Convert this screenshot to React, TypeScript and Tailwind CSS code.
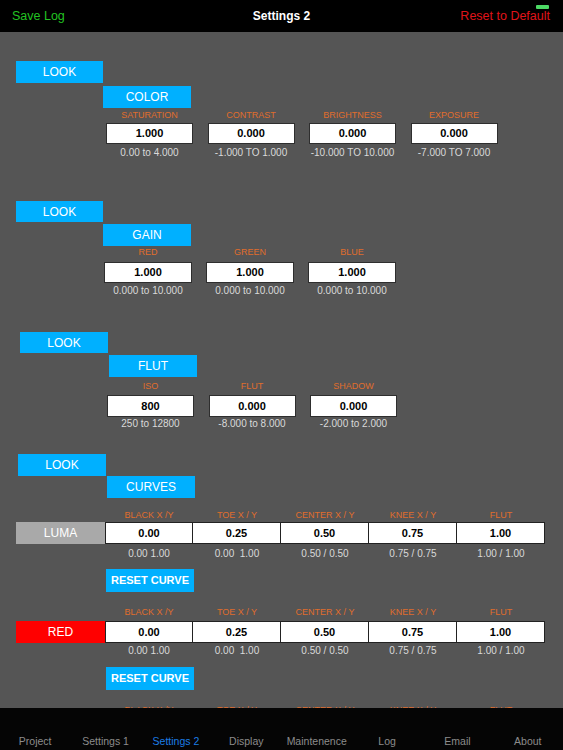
import React from "react";

type Col = { label: string; value: string; range: string };

function Head({ className, children }: { className: string; children: React.ReactNode }) {
  return (
    <div
      className={`bg-[#00b0ff] text-white text-[12px] flex items-center justify-center shrink-0 ${className}`}
    >
      {children}
    </div>
  );
}

function FieldRow({
  cols,
  rowCls,
  colW,
  labelCls,
  inputCls,
  rangeCls,
}: {
  cols: Col[];
  rowCls: string;
  colW: string;
  labelCls: string;
  inputCls: string;
  rangeCls: string;
}) {
  return (
    <div className={`flex ${rowCls}`}>
      {cols.map((c) => (
        <div key={c.label} className={`flex flex-col items-center ${colW}`}>
          <div className={`h-[14px] leading-[14px] text-[9px] text-[#e06d2c] whitespace-nowrap ${labelCls}`}>
            {c.label}
          </div>
          <div
            className={`w-full bg-white border border-[#2e2e2e] flex items-center justify-center text-[11px] font-bold text-black ${inputCls}`}
          >
            {c.value}
          </div>
          <div className={`text-[10px] text-[#dadada] whitespace-nowrap ${rangeCls}`}>{c.range}</div>
        </div>
      ))}
    </div>
  );
}

const curveLabels = ["BLACK X /Y", "TOE X / Y", "CENTER X / Y", "KNEE X / Y", "FLUT"];
const curveVals = ["0.00", "0.25", "0.50", "0.75", "1.00"];
const curveRanges = ["0.00 1.00", "0.00\u00a0 1.00", "0.50 / 0.50", "0.75 / 0.75", "1.00 / 1.00"];

function CurveLabels({ className }: { className: string }) {
  return (
    <div className={`flex ml-[105px] ${className}`}>
      {curveLabels.map((l) => (
        <div key={l} className="w-[88px] h-[14px] leading-[14px] text-center text-[9px] text-[#e06d2c] whitespace-nowrap">
          {l}
        </div>
      ))}
    </div>
  );
}

function CurveRow({ name, nameCls, className }: { name: string; nameCls: string; className: string }) {
  return (
    <div className={`flex ml-[16px] ${className}`}>
      <div className={`w-[89px] h-[22px] text-white text-[12px] flex items-center justify-center ${nameCls}`}>
        {name}
      </div>
      {curveVals.map((v, i) => (
        <div
          key={v}
          className={`w-[88px] h-[22px] bg-white border-y border-r border-[#222] ${
            i === 0 ? "border-l" : ""
          } flex items-center justify-center text-[11px] font-bold text-black`}
        >
          {v}
        </div>
      ))}
    </div>
  );
}

function CurveRanges({ className }: { className: string }) {
  return (
    <div className={`flex ml-[105px] ${className}`}>
      {curveRanges.map((r) => (
        <div key={r} className="w-[88px] h-[16px] leading-[16px] text-center text-[10px] text-[#dadada] whitespace-nowrap">
          {r}
        </div>
      ))}
    </div>
  );
}

const tabs = ["Project", "Settings 1", "Settings 2", "Display", "Maintenence", "Log", "Email", "About"];

export default function App() {
  return (
    <div className="w-[563px] h-[750px] flex flex-col bg-[#555555] overflow-hidden font-['Liberation_Sans',Arial,sans-serif]">
      {/* top bar */}
      <div className="relative h-[32px] shrink-0 bg-black flex items-center justify-between px-[12px]">
        <span className="text-[12.5px] text-[#22c322]">Save Log</span>
        <span className="absolute left-0 right-0 text-center text-[12px] font-bold text-white pointer-events-none">
          Settings 2
        </span>
        <span className="text-[12.5px] text-[#e0141a] mr-[1px]">Reset to Default</span>
        <div className="absolute top-[5px] left-[536px] w-[13px] h-[4px] bg-[#4cd964] rounded-[1px]" />
      </div>

      {/* content */}
      <div className="flex-1 min-h-0 overflow-hidden flex flex-col items-start">
        {/* Section 1 */}
        <Head className="mt-[29px] ml-[16px] w-[87px] h-[22px]">LOOK</Head>
        <Head className="mt-[3px] ml-[103px] w-[88px] h-[22px]">COLOR</Head>
        <FieldRow
          rowCls="ml-[106px] gap-[14.5px]"
          colW="w-[87px]"
          labelCls=""
          inputCls="mt-[1px] h-[21px]"
          rangeCls="h-[16px] leading-[16px] mt-[1px]"
          cols={[
            { label: "SATURATION", value: "1.000", range: "0.00 to 4.000" },
            { label: "CONTRAST", value: "0.000", range: "-1.000 TO 1.000" },
            { label: "BRIGHTNESS", value: "0.000", range: "-10.000 TO 10.000" },
            { label: "EXPOSURE", value: "0.000", range: "-7.000 TO 7.000" },
          ]}
        />

        {/* Section 2 */}
        <Head className="mt-[40px] ml-[16px] w-[87px] h-[21px]">LOOK</Head>
        <Head className="mt-[2px] ml-[103px] w-[88px] h-[22px]">GAIN</Head>
        <FieldRow
          rowCls="ml-[104px] gap-[14px]"
          colW="w-[88px]"
          labelCls="-mt-[1px]"
          inputCls="mt-[3px] h-[21px]"
          rangeCls="h-[16px] leading-[16px]"
          cols={[
            { label: "RED", value: "1.000", range: "0.000 to 10.000" },
            { label: "GREEN", value: "1.000", range: "0.000 to 10.000" },
            { label: "BLUE", value: "1.000", range: "0.000 to 10.000" },
          ]}
        />

        {/* Section 3 */}
        <Head className="mt-[33px] ml-[20px] w-[88px] h-[21px]">LOOK</Head>
        <Head className="mt-[2px] ml-[109px] w-[88px] h-[22px]">FLUT</Head>
        <FieldRow
          rowCls="ml-[107px] gap-[14.5px]"
          colW="w-[87px]"
          labelCls="mt-[2px]"
          inputCls="mt-[2px] h-[22px]"
          rangeCls="h-[14px] leading-[14px]"
          cols={[
            { label: "ISO", value: "800", range: "250 to 12800" },
            { label: "FLUT", value: "0.000", range: "-8.000 to 8.000" },
            { label: "SHADOW", value: "0.000", range: "-2.000 to 2.000" },
          ]}
        />

        {/* Section 4: curves */}
        <Head className="mt-[23px] ml-[18px] w-[88px] h-[22px]">LOOK</Head>
        <Head className="ml-[107px] w-[88px] h-[22px]">CURVES</Head>

        <CurveLabels className="mt-[10px]" />
        <CurveRow name="LUMA" nameCls="bg-[#a9a9a9]" className="" />
        <CurveRanges className="mt-[2px]" />
        <Head className="mt-[7px] ml-[106px] w-[88px] h-[23px] !text-[11px] font-bold">RESET CURVE</Head>

        <CurveLabels className="mt-[13px]" />
        <CurveRow name="RED" nameCls="bg-[#ff0000]" className="mt-[2px]" />
        <CurveRanges className="" />
        <Head className="mt-[8px] ml-[106px] w-[88px] h-[23px] !text-[11px] font-bold">RESET CURVE</Head>

        <CurveLabels className="mt-[13px]" />
      </div>

      {/* tab bar */}
      <div className="h-[42px] shrink-0 bg-[#050505] grid grid-cols-8 pt-[26px]">
        {tabs.map((t) => (
          <div
            key={t}
            className={`text-center text-[10.5px] leading-[14px] whitespace-nowrap ${
              t === "Settings 2" ? "text-[#1c7ee6]" : "text-[#8c8c8c]"
            }`}
          >
            {t}
          </div>
        ))}
      </div>
    </div>
  );
}
